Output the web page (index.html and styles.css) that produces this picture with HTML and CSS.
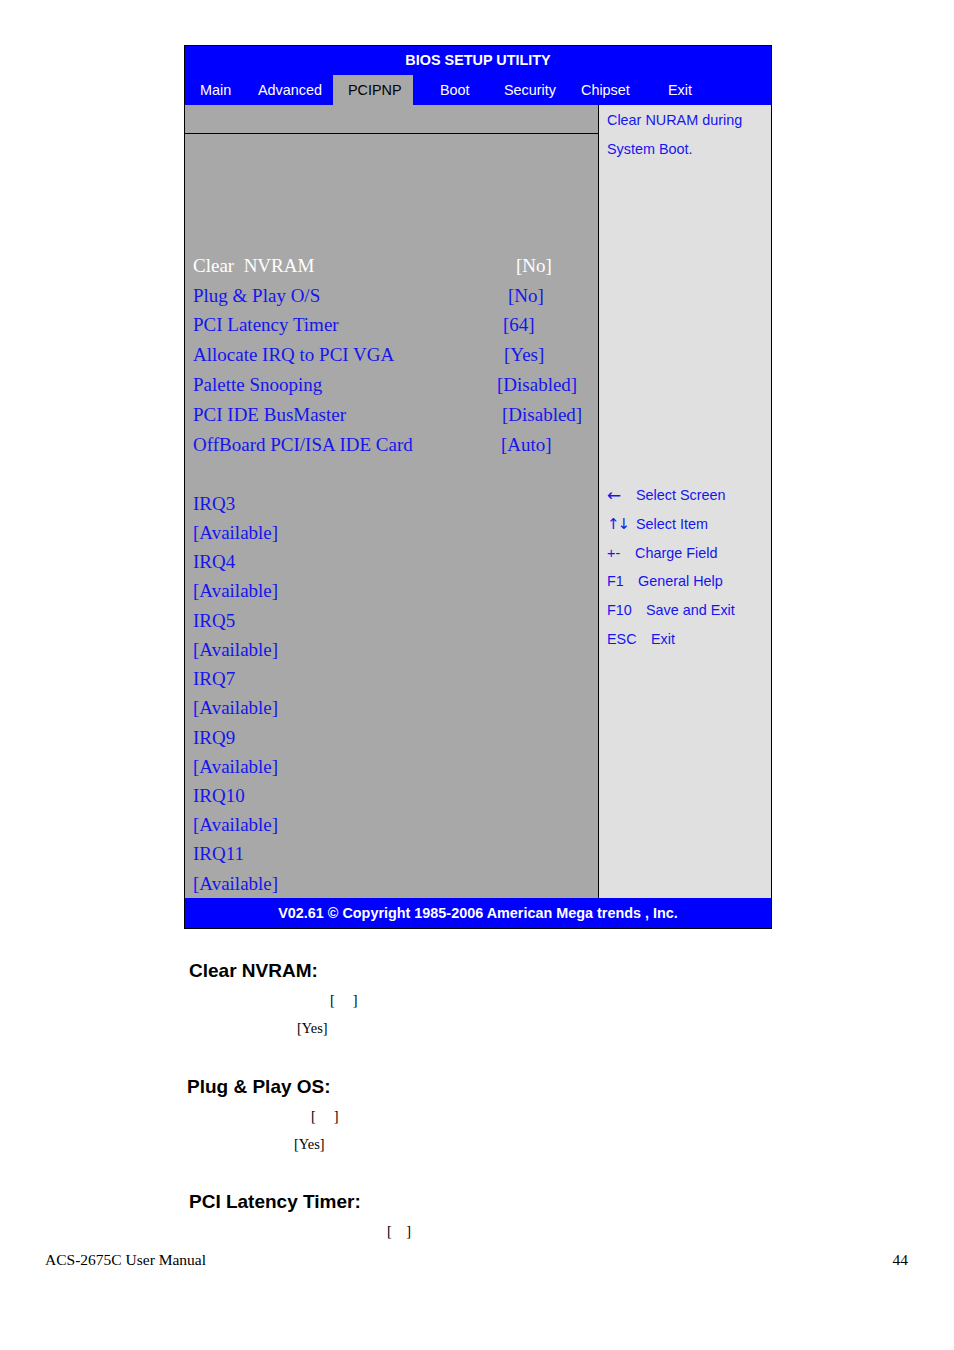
FILE: index.html
```html
<!DOCTYPE html>
<html>
<head>
<meta charset="utf-8">
<title>BIOS Setup Utility - PCIPNP</title>
<link rel="stylesheet" href="styles.css">
</head>
<body>
<div class="page">
  <div class="bios">
    <div class="title">BIOS SETUP UTILITY</div>
    <div class="menu">
      <span class="mi mi-main">Main</span>
      <span class="mi mi-adv">Advanced</span>
      <span class="mi mi-pci active">PCIPNP</span>
      <span class="mi mi-boot">Boot</span>
      <span class="mi mi-sec">Security</span>
      <span class="mi mi-chip">Chipset</span>
      <span class="mi mi-exit">Exit</span>
    </div>
    <div class="body">
      <div class="left">
        <div class="toprow"></div>
        <div class="row er"></div>
        <div class="row er"></div>
        <div class="row er"></div>
        <div class="row er"></div>
        <div class="row ir sel"><span class="lab">Clear  NVRAM</span><span class="val v1">[No]</span></div>
        <div class="row ir"><span class="lab">Plug &amp; Play O/S</span><span class="val v2">[No]</span></div>
        <div class="row ir"><span class="lab">PCI Latency Timer</span><span class="val v3">[64]</span></div>
        <div class="row ir"><span class="lab">Allocate IRQ to PCI VGA</span><span class="val v4">[Yes]</span></div>
        <div class="row ir"><span class="lab">Palette Snooping</span><span class="val v5">[Disabled]</span></div>
        <div class="row ir"><span class="lab">PCI IDE BusMaster</span><span class="val v6">[Disabled]</span></div>
        <div class="row ir"><span class="lab">OffBoard PCI/ISA IDE Card</span><span class="val v7">[Auto]</span></div>
        <div class="row br"></div>
        <div class="row qr"><span class="lab">IRQ3</span></div>
        <div class="row qr"><span class="lab">[Available]</span></div>
        <div class="row qr"><span class="lab">IRQ4</span></div>
        <div class="row qr"><span class="lab">[Available]</span></div>
        <div class="row qr"><span class="lab">IRQ5</span></div>
        <div class="row qr"><span class="lab">[Available]</span></div>
        <div class="row qr"><span class="lab">IRQ7</span></div>
        <div class="row qr"><span class="lab">[Available]</span></div>
        <div class="row qr"><span class="lab">IRQ9</span></div>
        <div class="row qr"><span class="lab">[Available]</span></div>
        <div class="row qr"><span class="lab">IRQ10</span></div>
        <div class="row qr"><span class="lab">[Available]</span></div>
        <div class="row qr"><span class="lab">IRQ11</span></div>
        <div class="row qr"><span class="lab">[Available]</span></div>
      </div>
      <div class="right">
        <div class="help">
          <div class="hl">Clear NURAM during</div>
          <div class="hl">System Boot.</div>
        </div>
        <div class="keys">
          <div class="kl"><span class="k k29 arrow larr">&#8592;</span><span>Select Screen</span></div>
          <div class="kl"><span class="k k29 arrow udarr">&#8593;&#8595;</span><span>Select Item</span></div>
          <div class="kl"><span class="k k28">+-</span><span>Charge Field</span></div>
          <div class="kl"><span class="k k31">F1</span><span>General Help</span></div>
          <div class="kl"><span class="k k39">F10</span><span>Save and Exit</span></div>
          <div class="kl"><span class="k k44">ESC</span><span>Exit</span></div>
        </div>
      </div>
    </div>
    <div class="footer">V02.61 &copy; Copyright 1985-2006 American Mega trends , Inc.</div>
  </div>

  <div class="doc">
    <div class="hd hd1">Clear NVRAM:</div>
    <div class="tx tx1">[     ]</div>
    <div class="tx tx2">[Yes]</div>
    <div class="hd hd2">Plug &amp; Play OS:</div>
    <div class="tx tx3">[     ]</div>
    <div class="tx tx4">[Yes]</div>
    <div class="hd hd3">PCI Latency Timer:</div>
    <div class="tx tx5">[    ]</div>
  </div>

  <div class="pfoot">
    <span>ACS-2675C User Manual</span>
    <span>44</span>
  </div>
</div>
</body>
</html>
```

FILE: styles.css
```css
html, body {
  margin: 0;
  padding: 0;
  background: #ffffff;
}

.page {
  width: 954px;
  height: 1350px;
  padding-top: 45px;
  box-sizing: border-box;
}

.bios {
  width: 588px;
  margin-left: 184px;
  border: 1px solid #000;
  box-sizing: border-box;
  font-family: "Liberation Sans", Arial, sans-serif;
}

.title {
  height: 29px;
  line-height: 29px;
  background: #0000ff;
  color: #ffffff;
  font-weight: bold;
  font-size: 14.4px;
  text-align: center;
}

.menu {
  display: flex;
  height: 30px;
  background: #0000ff;
}

.mi {
  display: block;
  height: 30px;
  line-height: 30px;
  color: #ffffff;
  font-size: 14.4px;
  box-sizing: border-box;
}

.mi.active {
  background: #a8a8a8;
  color: #000000;
}

.mi-main { width: 62px; padding-left: 15px; }
.mi-adv  { width: 86px; padding-left: 11px; }
.mi-pci  { width: 80px; padding-left: 15px; }
.mi-boot { width: 77px; padding-left: 27px; }
.mi-sec  { width: 80px; padding-left: 14px; }
.mi-chip { width: 80px; padding-left: 11px; }
.mi-exit { flex: 1; padding-left: 18px; }

.body {
  display: flex;
}

.left {
  width: 413px;
  background: #a8a8a8;
  border-right: 1px solid #000;
  font-family: "Liberation Serif", "Times New Roman", serif;
  font-size: 19px;
  color: #1515ee;
}

.toprow {
  height: 28px;
  border-bottom: 1px solid #000;
}

.row {
  padding-left: 8px;
  display: flex;
  white-space: pre;
}

.er { height: 29.2px; }
.ir { height: 29.8px; line-height: 29.8px; }
.br { height: 29.5px; }
.qr { height: 29.23px; line-height: 29.23px; }

.row.sel {
  color: #ffffff;
}

.lab {
  display: inline-block;
  width: 304px;
  flex: none;
}

.v1 { margin-left: 19px; }
.v2 { margin-left: 11px; }
.v3 { margin-left: 6px; }
.v4 { margin-left: 7px; }
.v5 { margin-left: 0px; }
.v6 { margin-left: 5px; }
.v7 { margin-left: 4px; }

.right {
  flex: 1;
  background: #e0e0e0;
  padding-left: 8px;
  color: #1515ee;
  font-size: 14.4px;
}

.help {
  padding-top: 1px;
}

.hl {
  height: 29px;
  line-height: 29px;
}

.keys {
  margin-top: 317px;
}

.kl {
  height: 28.8px;
  line-height: 28.8px;
  display: flex;
}

.k {
  display: inline-block;
  flex: none;
}

.k.arrow {
  font-family: "DejaVu Sans", "Liberation Sans", sans-serif;
}

.k.larr {
  font-size: 17px;
  line-height: 28px;
}

.k.udarr {
  font-size: 15px;
  letter-spacing: -2px;
}

.k29 { width: 29px; }
.k28 { width: 28px; }
.k31 { width: 31px; }
.k39 { width: 39px; }
.k44 { width: 44px; }

.footer {
  height: 30px;
  line-height: 30px;
  background: #0000ff;
  color: #ffffff;
  font-weight: bold;
  font-size: 14.4px;
  text-align: center;
}

.doc {
  font-family: "Liberation Sans", Arial, sans-serif;
}

.hd {
  height: 30px;
  line-height: 30px;
  font-weight: bold;
  font-size: 19px;
  color: #000;
}

.hd1 { margin-top: 27px; padding-left: 189px; }
.hd2 { margin-top: 30px; padding-left: 187px; }
.hd3 { margin-top: 29px; padding-left: 189px; }

.tx {
  height: 28px;
  line-height: 28px;
  font-family: "Liberation Serif", "Times New Roman", serif;
  font-size: 14.4px;
  color: #000;
  white-space: pre;
}

.tx1 { padding-left: 330px; }
.tx2 { padding-left: 297px; }
.tx3 { padding-left: 311px; }
.tx4 { padding-left: 294px; }
.tx5 { padding-left: 387px; }

.pfoot {
  margin-top: 5px;
  height: 20px;
  line-height: 20px;
  display: flex;
  justify-content: space-between;
  padding: 0 46px 0 45px;
  font-family: "Liberation Serif", "Times New Roman", serif;
  font-size: 15.5px;
  color: #000;
}
```
